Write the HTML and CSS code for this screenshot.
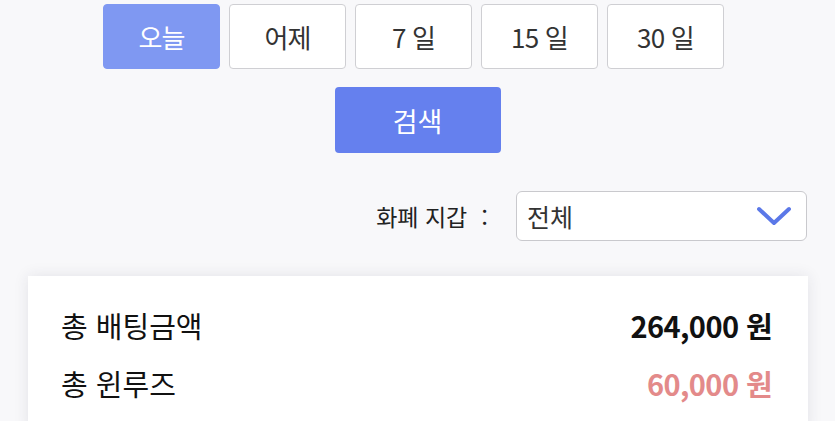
FILE: index.html
```html
<!DOCTYPE html>
<html lang="ko">
<head>
<meta charset="utf-8">
<link rel="stylesheet" href="styles.css">
</head>
<body>
<div class="page">
  <div class="periods">
    <button class="period active">오늘</button>
    <button class="period">어제</button>
    <button class="period">7 일</button>
    <button class="period">15 일</button>
    <button class="period">30 일</button>
  </div>
  <div class="search-row">
    <button class="search">검색</button>
  </div>
  <div class="filter-row">
    <span class="filter-label">화폐 지갑<span class="colon">:</span></span>
    <div class="select">
      <span class="select-value">전체</span>
      <svg class="chev" width="36" height="20" viewBox="0 0 36 20"><path d="M3 3 L18 17 L33 3" fill="none" stroke="#5b78e8" stroke-width="4" stroke-linecap="round" stroke-linejoin="round"/></svg>
    </div>
  </div>
  <div class="card">
    <div class="row">
      <span class="label">총 배팅금액</span>
      <span class="amount">264,000 원</span>
    </div>
    <div class="row">
      <span class="label">총 윈루즈</span>
      <span class="amount loss">60,000 원</span>
    </div>
  </div>
</div>
</body>
</html>
```
FILE: styles.css
```css
* { box-sizing: border-box; }
html, body { margin: 0; padding: 0; }
body {
  background: #f8f8fa;
  font-family: "Noto Sans CJK KR", "Noto Sans", sans-serif;
  color: #222;
  overflow: hidden;
}
.page { width: 835px; height: 421px; overflow: hidden; }
.periods {
  display: flex;
  justify-content: center;
  gap: 9px;
  padding-top: 4px;
  padding-right: 8px;
}
.period {
  width: 117px;
  height: 65px;
  border: 1px solid #cfcfd3;
  border-radius: 4px;
  background: #fff;
  color: #333;
  font-family: inherit;
  font-size: 26px;
  letter-spacing: -0.8px;
  padding: 0;
}
.period.active {
  background: #7f98f2;
  border-color: #7f98f2;
  color: #fff;
}
.search-row {
  display: flex;
  justify-content: center;
  margin-top: 18px;
}
.search {
  width: 166px;
  height: 66px;
  border: 0;
  border-radius: 4px;
  background: #6580ee;
  color: #fff;
  font-family: inherit;
  font-size: 27px;
  padding: 0;
}
.filter-row {
  display: flex;
  justify-content: flex-end;
  align-items: center;
  gap: 28px;
  margin-top: 38px;
  padding-right: 28px;
}
.filter-label {
  font-size: 23px;
  color: #222;
  display: flex;
  align-items: center;
}
.colon {
  margin-left: 14px;
  font-size: 24px;
}
.select {
  width: 291px;
  height: 50px;
  border: 1px solid #c9c9cd;
  border-radius: 6px;
  background: #fff;
  display: flex;
  align-items: center;
  justify-content: space-between;
  padding: 0 14px 0 10px;
}
.select-value { font-size: 25px; color: #333; }
.card {
  margin: 35px 27px 0 28px;
  background: #fff;
  box-shadow: 0 0 14px rgba(40, 40, 70, 0.10);
  padding: 20px 36px 20px 33px;
}
.row {
  display: flex;
  justify-content: space-between;
  align-items: center;
  height: 58px;
}
.label { font-size: 29px; color: #111; letter-spacing: 0; }
.amount { font-size: 29px; font-weight: 700; color: #111; letter-spacing: -0.6px; }
.amount.loss { color: #e38a8a; }
```
